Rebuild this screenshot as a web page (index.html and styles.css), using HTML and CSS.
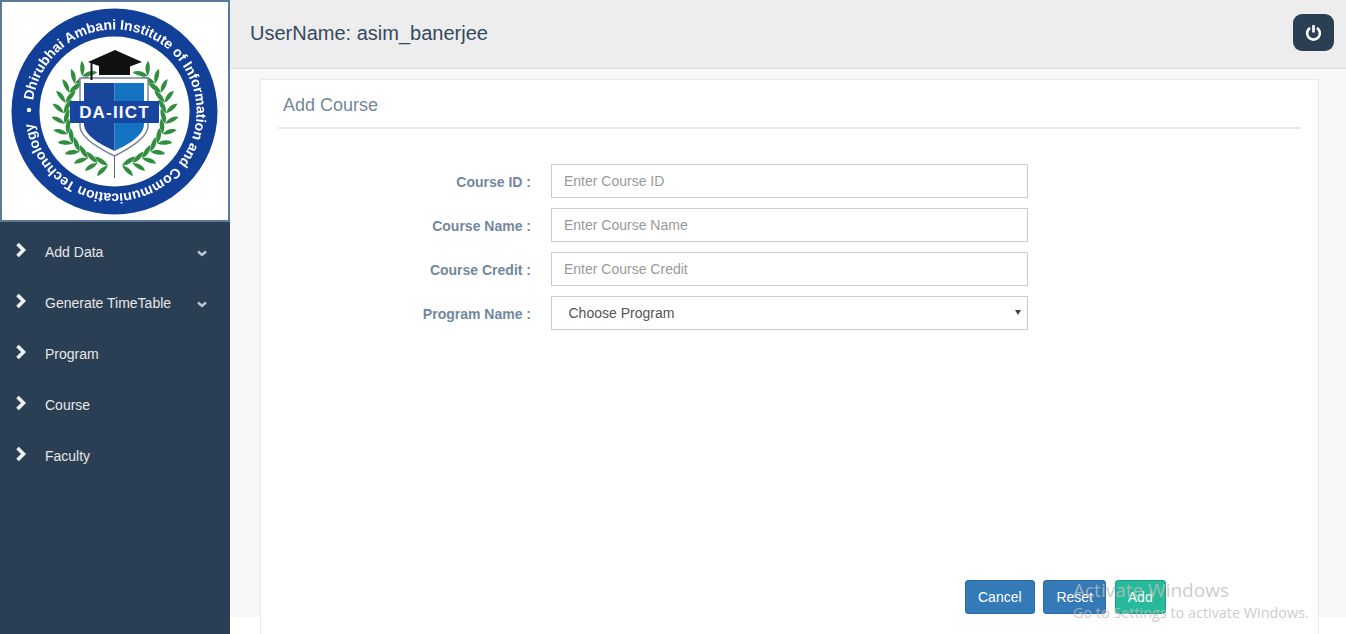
FILE: index.html
```html
<!DOCTYPE html>
<html lang="en">
<head>
<meta charset="utf-8">
<title>Add Course</title>
<link rel="stylesheet" href="styles.css">
</head>
<body>
<div class="app">
  <aside class="sidebar">
    <div class="logo-box">
      <svg class="logo" viewBox="0 0 226 218" aria-label="DA-IICT logo">
        <defs>
          <path id="ring" d="M30.5 109.5a82 82 0 1 1 164 0a82 82 0 1 1 -164 0"/>
          <g id="pair">
            <path d="M0 -51 C-1 -56 -4 -60 -9 -63 C-10 -58 -6 -53 0 -51Z"/>
            <path d="M0 -51 C-3 -47 -8 -44 -14 -44 C-12 -49 -6 -52 0 -51Z"/>
          </g>
        </defs>
        <circle cx="112.5" cy="109.5" r="103" fill="#123f97"/>
        <circle cx="112.5" cy="109.5" r="75" fill="#fff"/>
        <text class="ring-text"><textPath href="#ring" startOffset="11" textLength="492" lengthAdjust="spacing">Dhirubhai Ambani Institute of Information and Communication Technology</textPath></text>
        <circle cx="27" cy="108" r="2.2" fill="#fff"/>
        <g class="wreath" transform="translate(113 113)">
          <use href="#pair" transform="rotate(-40) scale(-1 1)"/>
          <use href="#pair" transform="rotate(-52) scale(-1 1)"/>
          <use href="#pair" transform="rotate(-64) scale(-1 1)"/>
          <use href="#pair" transform="rotate(-76) scale(-1 1)"/>
          <use href="#pair" transform="rotate(-88) scale(-1 1)"/>
          <use href="#pair" transform="rotate(-100) scale(-1 1)"/>
          <use href="#pair" transform="rotate(-112) scale(-1 1)"/>
          <use href="#pair" transform="rotate(-124) scale(-1 1)"/>
          <use href="#pair" transform="rotate(-136) scale(-1 1)"/>
          <use href="#pair" transform="rotate(-148) scale(-1 1)"/>
          <use href="#pair" transform="rotate(-160) scale(-1 1)"/>
          <use href="#pair" transform="rotate(-172) scale(-1 1)"/>
          <use href="#pair" transform="rotate(40)"/>
          <use href="#pair" transform="rotate(52)"/>
          <use href="#pair" transform="rotate(64)"/>
          <use href="#pair" transform="rotate(76)"/>
          <use href="#pair" transform="rotate(88)"/>
          <use href="#pair" transform="rotate(100)"/>
          <use href="#pair" transform="rotate(112)"/>
          <use href="#pair" transform="rotate(124)"/>
          <use href="#pair" transform="rotate(136)"/>
          <use href="#pair" transform="rotate(148)"/>
          <use href="#pair" transform="rotate(160)"/>
          <use href="#pair" transform="rotate(172)"/>
        </g>
        <path d="M112.5 150V176" stroke="#667" stroke-width="1" fill="none"/>
        <path d="M78 76H146V124C146 136 126 147 112.500 154C98 147 78 136 78 124Z" fill="#fff" stroke="#7d86a0" stroke-width="1.500"/>
        <path d="M82 81H112.500V149C100 143 82 134 82 122Z" fill="#17469a"/>
        <path d="M112.500 81H142V122C142 134 125 143 112.500 149Z" fill="#1573c4"/>
        <rect x="68" y="99" width="89" height="22" fill="#17459f"/>
        <text class="badge-text" x="112.500" y="116" text-anchor="middle">DA-IICT</text>
        <path d="M97 60H128V73H97Z" fill="#111"/>
        <path d="M113 48L140 60L113 70L86 60Z" fill="#111"/>
        <path d="M89.500 61V78" stroke="#111" stroke-width="2" fill="none"/>
      </svg>
    </div>
    <nav class="menu">
      <a class="menu-item">
        <svg class="chev" viewBox="0 0 12 16"><path d="M2.500 2L8.500 8L2.500 14"/></svg>
        <span class="menu-label">Add Data</span>
        <svg class="caret" viewBox="0 0 10 7"><path d="M1 1.500L5 5L9 1.500"/></svg>
      </a>
      <a class="menu-item">
        <svg class="chev" viewBox="0 0 12 16"><path d="M2.500 2L8.500 8L2.500 14"/></svg>
        <span class="menu-label">Generate TimeTable</span>
        <svg class="caret" viewBox="0 0 10 7"><path d="M1 1.500L5 5L9 1.500"/></svg>
      </a>
      <a class="menu-item">
        <svg class="chev" viewBox="0 0 12 16"><path d="M2.500 2L8.500 8L2.500 14"/></svg>
        <span class="menu-label">Program</span>
      </a>
      <a class="menu-item">
        <svg class="chev" viewBox="0 0 12 16"><path d="M2.500 2L8.500 8L2.500 14"/></svg>
        <span class="menu-label">Course</span>
      </a>
      <a class="menu-item">
        <svg class="chev" viewBox="0 0 12 16"><path d="M2.500 2L8.500 8L2.500 14"/></svg>
        <span class="menu-label">Faculty</span>
      </a>
    </nav>
  </aside>
  <div class="main">
    <header class="topbar">
      <div class="username">UserName: asim_banerjee</div>
      <button class="power" type="button" aria-label="Log out">
        <svg viewBox="0 0 16 16"><path d="M4.800 3.600A6 6 0 1 0 11.200 3.600"/><path d="M8 1V8"/></svg>
      </button>
    </header>
    <section class="content">
      <div class="panel">
        <h2 class="panel-title">Add Course</h2>
        <form class="form">
          <div class="row">
            <label class="label">Course ID :</label>
            <input class="field" type="text" placeholder="Enter Course ID">
          </div>
          <div class="row">
            <label class="label">Course Name :</label>
            <input class="field" type="text" placeholder="Enter Course Name">
          </div>
          <div class="row">
            <label class="label">Course Credit :</label>
            <input class="field" type="text" placeholder="Enter Course Credit">
          </div>
          <div class="row">
            <label class="label">Program Name :</label>
            <div class="select-wrap">
              <select class="field select"><option>Choose Program</option></select>
            </div>
          </div>
        </form>
        <div class="actions">
          <button class="btn btn-blue" type="button">Cancel</button>
          <button class="btn btn-blue" type="button">Reset</button>
          <button class="btn btn-green" type="button">Add</button>
        </div>
      </div>
    </section>
  </div>
</div>
<div class="watermark">
  <div class="wm-title">Activate Windows</div>
  <div class="wm-sub">Go to Settings to activate Windows.</div>
</div>
</body>
</html>
```

FILE: styles.css
```css
* { box-sizing: border-box; }
html, body { margin: 0; height: 100%; background: #fff; overflow: hidden; }
body { font-family: "Liberation Sans", Arial, sans-serif; font-size: 14px; color: #73879c; }

.app { display: flex; height: 634px; }

.sidebar { width: 230px; flex: none; background: #2a3f54; }
.logo-box { height: 222px; background: #fff; border: 2px solid #5b7a99; }
.logo { display: block; width: 226px; height: 218px; filter: blur(.35px); }
.ring-text { font: bold 14px "Liberation Sans", Arial, sans-serif; fill: #fff; }
.badge-text { font: bold 17px "Liberation Sans", Arial, sans-serif; fill: #fff; letter-spacing: 1.200px; }
.wreath { fill: #2f8f3e; }

.menu { padding-top: 4px; }
.menu-item { display: flex; align-items: center; height: 51px; padding-left: 15px; color: #e7e7e7; }
.chev { width: 12px; height: 16px; margin-top: -4px; fill: none; stroke: #ecf0f1; stroke-width: 3.600; }
.menu-label { margin-left: 18px; flex: 1; }
.caret { width: 10px; height: 7px; margin-right: 23px; margin-top: 3px; fill: none; stroke: #bfc8d0; stroke-width: 2.400; }

.main { flex: 1; min-width: 0; display: flex; flex-direction: column; }
.topbar { height: 69px; flex: none; display: flex; align-items: center; justify-content: space-between; padding: 0 12px 4px 20px; background: #ededed; border-bottom: 1px solid #d9dee4; }
.username { font-size: 20px; padding-top: 2px; color: #34495e; }
.power { width: 41px; height: 37px; padding: 0; border: 0; border-radius: 9px; background: #2a3f54; display: flex; align-items: center; justify-content: center; }
.power svg { width: 17px; height: 17px; fill: none; stroke: #fff; stroke-width: 2.500; }

.content { height: 548px; flex: none; background: #f7f7f7; padding: 10px 27px 0 30px; }
.panel { height: 570px; display: flex; flex-direction: column; background: #fff; border: 1px solid #e6e9ed; padding: 0 17px; }
.panel-title { margin: 0; height: 49px; padding: 15px 5px 0; font-size: 18px; line-height: 20px; font-weight: 400; color: #73879c; border-bottom: 2px solid #e6e9ed; }

.form { padding-top: 35px; display: flex; flex-direction: column; gap: 10px; }
.row { display: flex; align-items: center; height: 34px; }
.label { width: 253px; padding-top: 2px; font-weight: 700; text-align: right; color: #73879c; }
.field { width: 477px; height: 34px; margin-left: 20px; padding: 0 12px; border: 1px solid #ccc; border-radius: 0; background: #fff; color: #555; font: 14px "Liberation Sans", Arial, sans-serif; outline: 0; }
.field::placeholder { color: #999; opacity: 1; }
.select-wrap { position: relative; display: flex; }
.select { appearance: none; padding-left: 16.500px; }
.select-wrap::after { content: ""; position: absolute; right: 7px; top: 14px; border-style: solid; border-width: 5px 3px 0; border-color: #444 transparent transparent; }

.actions { display: flex; margin-top: 250px; margin-left: 687px; }
.btn { height: 34px; padding: 0 12px; border-radius: 3px; color: #fff; font: 14px "Liberation Sans", Arial, sans-serif; margin-right: 8.800px; }
.btn-blue { background: #337ab7; border: 1px solid #2e6da4; }
.btn-green { background: #26b99a; border: 1px solid #169f85; }

.watermark { position: absolute; left: 1073px; top: 577px; color: rgba(190, 190, 190, .8); font-family: "Open Sans", sans-serif; white-space: nowrap; pointer-events: none; }
.wm-title { font-size: 19px; line-height: 27px; }
.wm-sub { font-size: 14.400px; line-height: 20px; margin-top: -1px; }
```
